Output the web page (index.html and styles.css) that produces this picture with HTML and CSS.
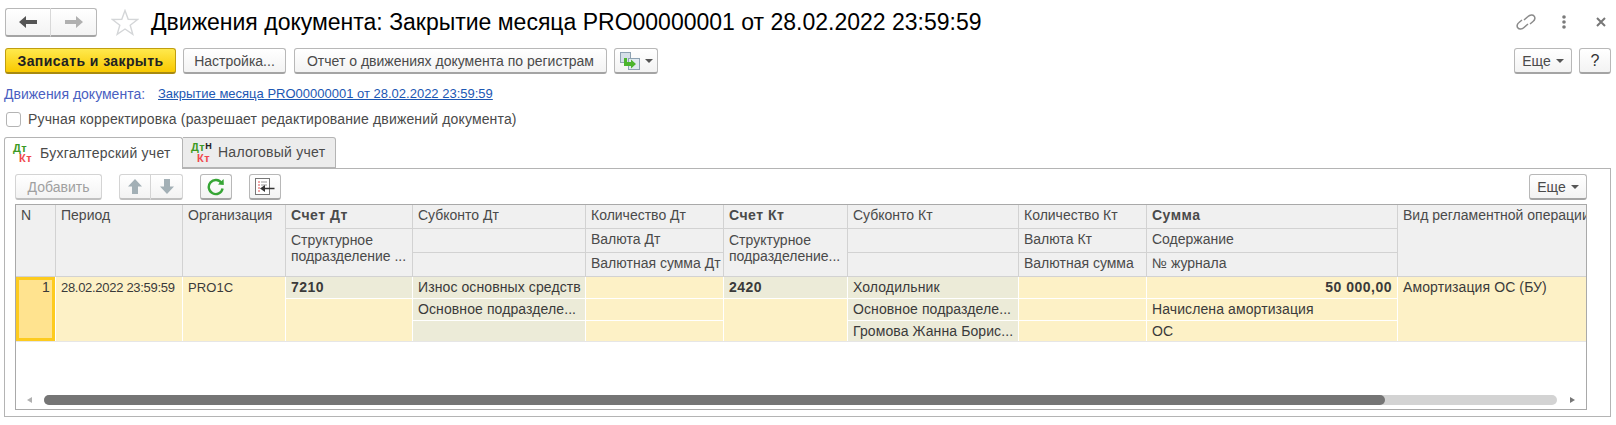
FILE: index.html
```html
<!DOCTYPE html>
<html lang="ru">
<head>
  <meta charset="UTF-8">
  <title>Движения документа</title>
  <link rel="stylesheet" href="styles.css">
</head>
<body>
  <div class="page">
    <!-- Title bar -->
    <div class="title-bar">
      <div class="nav-group">
        <button class="btn nav-btn" type="button">
          <svg width="18" height="14" viewBox="0 0 18 14"><path d="M0 7 L7 1 V5 H18 V9 H7 V13 Z" fill="#555"/></svg>
        </button>
        <button class="btn nav-btn" type="button">
          <svg width="18" height="14" viewBox="0 0 18 14"><path d="M18 7 L11 1 V5 H0 V9 H11 V13 Z" fill="#b0b0b0"/></svg>
        </button>
      </div>
      <svg class="star" width="28" height="27" viewBox="0 0 28 27"><path d="M14 1.5 L17.2 10.2 L26.6 10.5 L19.2 16.2 L21.8 25.3 L14 20 L6.2 25.3 L8.8 16.2 L1.4 10.5 L10.8 10.2 Z" fill="#fff" stroke="#d4d6d8" stroke-width="1.4"/></svg>
      <h1 class="title">Движения документа: Закрытие месяца PRO00000001 от 28.02.2022 23:59:59</h1>
      <div class="win-icons">
        <svg width="22" height="20" viewBox="0 0 22 20" fill="none" stroke="#8a8a8a" stroke-width="1.5"><path d="M9 8 L13 4.5 C15 2.5 18 2.5 19 4 C20.5 5.5 20 8 18 9.5 L15 12"/><path d="M13 12 L9 15.5 C7 17.5 4 17.5 3 16 C1.5 14.5 2 12 4 10.5 L7 8"/></svg>
        <svg class="dots" width="4" height="14" viewBox="0 0 4 14"><circle cx="2" cy="2" r="1.8" fill="#7a7a7a"/><circle cx="2" cy="7" r="1.8" fill="#7a7a7a"/><circle cx="2" cy="12" r="1.8" fill="#7a7a7a"/></svg>
        <svg class="close" width="10" height="10" viewBox="0 0 10 10"><path d="M1 1 L9 9 M9 1 L1 9" stroke="#777" stroke-width="2"/></svg>
      </div>
    </div>

    <!-- Command bar -->
    <div class="cmd-bar">
      <button class="btn btn-primary" type="button">Записать и закрыть</button>
      <button class="btn btn-setup" type="button">Настройка...</button>
      <button class="btn btn-report" type="button">Отчет о движениях документа по регистрам</button>
      <button class="btn btn-docs" type="button">
        <svg width="20" height="18" viewBox="0 0 20 18">
          <rect x="0.5" y="0.5" width="10" height="10" fill="#d5dfe8" stroke="#8ea2b2"/>
          <rect x="8.5" y="6.5" width="11" height="11" fill="#dfe9f1" stroke="#8ea2b2"/>
          <path d="M4 6 H7 V10 H11 V7.5 L16 12 L11 16.5 V14 H4 Z" fill="#4bb52e"/>
        </svg>
        <span class="caret"></span>
      </button>
      <div class="cmd-right">
        <button class="btn btn-more" type="button">Еще <span class="caret"></span></button>
        <button class="btn btn-help" type="button">?</button>
      </div>
    </div>

    <div class="doc-row">
      <span class="doc-label">Движения документа:</span>
      <a class="doc-link" href="#">Закрытие месяца PRO00000001 от 28.02.2022 23:59:59</a>
    </div>

    <label class="check-row">
      <span class="check-box"></span>
      Ручная корректировка (разрешает редактирование движений документа)
    </label>

    <!-- Tabs -->
    <div class="tabs">
      <div class="tab tab-active">
        <span class="dk-icon"><span class="dt">Дт</span><span class="kt">Кт</span></span>
        Бухгалтерский учет
      </div>
      <div class="tab">
        <span class="dk-icon"><span class="dt">Дт<b class="tax">Н</b></span><span class="kt">Кт</span></span>
        Налоговый учет
      </div>
    </div>

    <div class="panel">
      <div class="toolbar">
        <button class="btn btn-add" type="button">Добавить</button>
        <div class="move-group">
          <button class="btn move-btn" type="button">
            <svg width="16" height="17" viewBox="0 0 16 17"><path d="M8 1 L15 8.5 H11 V16 H5 V8.5 H1 Z" fill="#a3b0b6"/></svg>
          </button>
          <button class="btn move-btn" type="button">
            <svg width="16" height="17" viewBox="0 0 16 17"><path d="M8 16 L15 8.5 H11 V1 H5 V8.5 H1 Z" fill="#a3b0b6"/></svg>
          </button>
        </div>
        <button class="btn btn-icon" type="button">
          <svg width="18" height="18" viewBox="0 0 18 18" fill="none"><path d="M14.6 5.2 A7 7 0 1 0 15.6 10.5" stroke="#36a535" stroke-width="2.4"/><path d="M11 6.6 L16.8 7 L16.6 1 Z" fill="#36a535"/></svg>
        </button>
        <button class="btn btn-icon" type="button">
          <svg width="20" height="18" viewBox="0 0 20 18">
            <rect x="0.5" y="0.5" width="14" height="16" fill="#fff" stroke="#777"/>
            <path d="M3 4 H5 M3 7 H5 M3 10 H5 M3 13 H5" stroke="#e05050"/>
            <path d="M6 4 H12 M6 7 H12" stroke="#999"/>
            <path d="M10 10.5 H19.5" stroke="#333" stroke-width="1.5"/>
            <path d="M5 10.5 L10 7 V14 Z" fill="#333"/>
          </svg>
        </button>
        <button class="btn btn-more btn-more-table" type="button">Еще <span class="caret"></span></button>
      </div>

      <div class="table">
        <div class="grid grid-head">
          <div class="hcell span3">N</div>
          <div class="hcell span3">Период</div>
          <div class="hcell span3">Организация</div>
          <div class="hcell bold">Счет Дт</div>
          <div class="hcell">Субконто Дт</div>
          <div class="hcell">Количество Дт</div>
          <div class="hcell bold">Счет Кт</div>
          <div class="hcell">Субконто Кт</div>
          <div class="hcell">Количество Кт</div>
          <div class="hcell bold">Сумма</div>
          <div class="hcell span3">Вид регламентной операции</div>

          <div class="hcell span2 wrap">Структурное<br>подразделение ...</div>
          <div class="hcell"></div>
          <div class="hcell">Валюта Дт</div>
          <div class="hcell span2 wrap">Структурное<br>подразделение...</div>
          <div class="hcell"></div>
          <div class="hcell">Валюта Кт</div>
          <div class="hcell">Содержание</div>

          <div class="hcell"></div>
          <div class="hcell">Валютная сумма Дт</div>
          <div class="hcell"></div>
          <div class="hcell">Валютная сумма</div>
          <div class="hcell">№ журнала</div>
        </div>

        <div class="grid grid-body">
          <div class="cell span3 cell-num">1</div>
          <div class="cell span3 cell-date">28.02.2022 23:59:59</div>
          <div class="cell span3 cell-org">PRO1C</div>
          <div class="cell grey bold">7210</div>
          <div class="cell grey">Износ основных средств</div>
          <div class="cell"></div>
          <div class="cell grey bold">2420</div>
          <div class="cell grey">Холодильник</div>
          <div class="cell"></div>
          <div class="cell bold right">50 000,00</div>
          <div class="cell span3">Амортизация ОС (БУ)</div>

          <div class="cell span2"></div>
          <div class="cell grey">Основное подразделе...</div>
          <div class="cell"></div>
          <div class="cell span2"></div>
          <div class="cell grey">Основное подразделе...</div>
          <div class="cell"></div>
          <div class="cell">Начислена амортизация</div>

          <div class="cell grey"></div>
          <div class="cell"></div>
          <div class="cell grey">Громова Жанна Борис...</div>
          <div class="cell"></div>
          <div class="cell">ОС</div>
        </div>

        <div class="scroll">
          <span class="arrow arrow-left"></span>
          <div class="track"><div class="thumb"></div></div>
          <span class="arrow arrow-right"></span>
        </div>
      </div>
    </div>
  </div>
</body>
</html>
```

FILE: styles.css
```css
/* Basic Reset */
* {
  margin: 0;
  padding: 0;
  box-sizing: border-box;
  font-family: "Liberation Sans", Arial, sans-serif;
}

body {
  background-color: #fff;
  color: #4a4a4a;
  font-size: 14px;
  overflow: hidden;
}

.page {
  padding: 8px 5px 0 4px;
}

/* Buttons */
.btn {
  height: 26px;
  background: linear-gradient(#fff, #f3f3f3);
  border: 1px solid #b8b8b8;
  border-bottom: 2px solid #a4a4a4;
  border-radius: 3px;
  color: #4a4a4a;
  font-size: 14px;
  display: inline-flex;
  align-items: center;
  justify-content: center;
}

.caret {
  display: inline-block;
  width: 0;
  height: 0;
  border-left: 4px solid transparent;
  border-right: 4px solid transparent;
  border-top: 4px solid #555;
}

/* Title bar */
.title-bar {
  display: flex;
  align-items: center;
  height: 28px;
  margin-left: 1px;
}

.nav-group {
  display: flex;
  width: 92px;
}

.nav-btn {
  width: 46px;
  height: 29px;
}

.nav-btn:first-child {
  border-radius: 3px 0 0 3px;
  border-right: 1px solid #d8d8d8;
}

.nav-btn:last-child {
  border-radius: 0 3px 3px 0;
  border-left: none;
}

.star {
  margin-left: 14px;
}

.title {
  margin-left: 12px;
  font-size: 23px;
  font-weight: normal;
  color: #000;
  white-space: nowrap;
}

.win-icons {
  margin-left: auto;
  display: flex;
  align-items: center;
}

.dots {
  margin-left: 25px;
}

.close {
  margin-left: 30px;
  margin-right: 5px;
}

/* Command bar */
.cmd-bar {
  display: flex;
  margin-top: 12px;
  margin-left: 1px;
}

.btn-primary {
  width: 171px;
  background: linear-gradient(#ffe94d, #f9c900);
  border-color: #c09e10;
  border-bottom-color: #a88a10;
  color: #222;
  font-weight: bold;
  letter-spacing: 0.4px;
}

.btn-setup {
  width: 103px;
  margin-left: 7px;
}

.btn-report {
  width: 313px;
  margin-left: 8px;
}

.btn-docs {
  width: 44px;
  margin-left: 7px;
  gap: 5px;
}

.cmd-right {
  margin-left: auto;
  display: flex;
  gap: 7px;
}

.btn-more {
  width: 58px;
  gap: 5px;
}

.btn-help {
  width: 32px;
  font-size: 16px;
  color: #333;
}

/* Document link row */
.doc-row {
  display: flex;
  height: 16px;
  margin-top: 12px;
  line-height: 16px;
}

.doc-label {
  width: 154px;
  color: #4a5fc1;
}

.doc-link {
  color: #1c57b3;
  font-size: 13px;
}

.check-row {
  display: flex;
  align-items: center;
  height: 16px;
  margin-top: 9px;
  margin-left: 2px;
  gap: 7px;
  letter-spacing: 0.15px;
}

.check-box {
  width: 15px;
  height: 15px;
  border: 1px solid #b4b4b4;
  border-radius: 3px;
  background: #fff;
}

/* Tabs */
.tabs {
  display: flex;
  margin-top: 10px;
  height: 31px;
}

.tab {
  display: flex;
  align-items: center;
  width: 153px;
  height: 31px;
  padding: 0 0 2px 8px;
  gap: 5px;
  background: #ececec;
  border: 1px solid #b4b4b4;
  border-left: none;
  border-radius: 0 3px 0 0;
  letter-spacing: 0.25px;
}

.tab-active {
  position: relative;
  z-index: 1;
  width: 179px;
  height: 32px;
  background: #fff;
  border-left: 1px solid #b4b4b4;
  border-bottom: none;
  border-radius: 3px 3px 0 0;
}

.dk-icon {
  display: flex;
  flex-direction: column;
  width: 22px;
  height: 19px;
  margin-top: 2px;
  font-size: 11px;
  font-weight: bold;
  line-height: 9.5px;
  letter-spacing: 0.5px;
}

.dt {
  color: #3d9a24;
}

.kt {
  color: #f0484c;
  margin-left: 6px;
}

.tax {
  position: relative;
  top: -2px;
  color: #222;
  font-size: 9px;
}

/* Panel */
.panel {
  width: 1607px;
  height: 249px;
  padding: 5px 23px 0 10px;
  border: 1px solid #b4b4b4;
}

.toolbar {
  display: flex;
  height: 26px;
}

.btn-add {
  width: 87px;
  color: #a0a0a0;
  border-color: #d4d4d4;
  border-bottom-color: #c0c0c0;
}

.move-group {
  display: flex;
  margin-left: 17px;
}

.move-btn {
  width: 32px;
  border-color: #d4d4d4;
  border-bottom-color: #c0c0c0;
}

.move-btn:first-child {
  border-radius: 3px 0 0 3px;
}

.move-btn:last-child {
  border-radius: 0 3px 3px 0;
  border-left: none;
}

.btn-icon {
  width: 32px;
  margin-left: 17px;
}

.btn-more-table {
  margin-left: auto;
}

/* Table */
.table {
  display: flex;
  flex-direction: column;
  width: 1572px;
  height: 206px;
  margin-top: 4px;
  border: 1px solid #a9a9a9;
  overflow: hidden;
}

.grid {
  display: grid;
  grid-template-columns: 39px 126px 102px 126px 172px 137px 123px 170px 127px 250px 188px;
  gap: 1px;
  padding-bottom: 1px;
}

.grid-head {
  grid-template-rows: 23px 23px 23px;
  background-color: #d2d2d2;
}

.grid-body {
  grid-template-rows: 21px 21px 20px;
  background-color: #fff;
  border-bottom: 1px solid #e6e6e6;
  padding-bottom: 0;
}

.hcell {
  background-color: #f0f0f0;
  padding: 3px 4px 0 5px;
  line-height: 15px;
  white-space: nowrap;
  overflow: hidden;
}

.cell {
  background-color: #fdf1c6;
  color: #3a3a3a;
  padding: 3px 5px 0;
  line-height: 15px;
  letter-spacing: 0.1px;
  white-space: nowrap;
  overflow: hidden;
}

.span2 {
  grid-row: span 2;
}

.span3 {
  grid-row: span 3;
}

.wrap {
  line-height: 16px;
}

.bold {
  font-weight: bold;
  letter-spacing: 0.5px;
}

.right {
  text-align: right;
}

.grey {
  background-color: #ecebd8;
}

.cell-num {
  background-color: #ffe38f;
  border: 3px solid #fdcb1f;
  padding: 0 2px 0 0;
  text-align: right;
}

.cell-date {
  font-size: 13px;
  letter-spacing: -0.3px;
}

.cell-org {
  font-size: 13px;
}

/* Scrollbar */
.scroll {
  display: flex;
  align-items: center;
  height: 10px;
  margin-top: auto;
  margin-bottom: 4px;
  padding-left: 11px;
}

.arrow {
  width: 0;
  height: 0;
  border-top: 3px solid transparent;
  border-bottom: 3px solid transparent;
}

.arrow-left {
  border-right: 5px solid #b0b0b0;
}

.arrow-right {
  border-left: 5px solid #777;
  margin-left: 13px;
}

.track {
  width: 1513px;
  height: 10px;
  margin-left: 12px;
  background-color: #d3d3d3;
  border-radius: 5px;
}

.thumb {
  width: 1341px;
  height: 10px;
  background-color: #757575;
  border-radius: 5px;
}
```
